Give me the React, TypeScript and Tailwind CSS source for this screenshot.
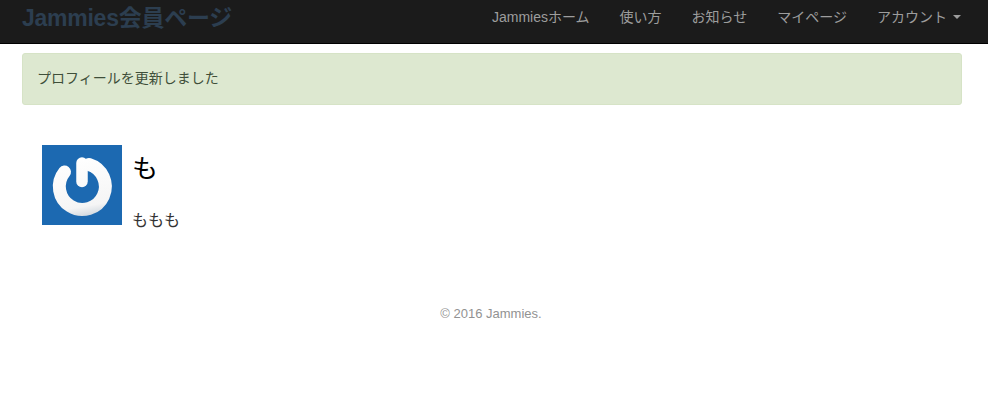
const font = "font-['Liberation_Sans','Noto_Sans_CJK_JP',sans-serif]";

const navItems = ["Jammiesホーム", "使い方", "お知らせ", "マイページ"];

function Logo() {
  return (
    <svg width="80" height="80" viewBox="0 0 80 80" className="block shrink-0">
      <defs>
        <linearGradient id="ring" gradientUnits="userSpaceOnUse" x1="34" y1="12" x2="44" y2="70">
          <stop offset="0" stopColor="#ffffff" />
          <stop offset="0.85" stopColor="#f5f5f5" />
          <stop offset="1" stopColor="#d6dce2" />
        </linearGradient>
      </defs>
      <rect width="80" height="80" fill="#1c69b1" />
      <path
        d="M22.5 27 A23 23 0 1 0 47 19.5"
        fill="none"
        stroke="url(#ring)"
        strokeWidth="13"
        strokeLinecap="round"
      />
      <path d="M40 18 L40 36.5" fill="none" stroke="url(#ring)" strokeWidth="11.5" strokeLinecap="round" />
    </svg>
  );
}

export default function App() {
  return (
    <div className={`${font} bg-white min-h-[402px] text-[14px] text-[#333]`}>
      <nav className="h-[44px] bg-[#1b1b1b] border-b border-black flex justify-between pl-[22px] pr-[27px]">
        <a className="text-[23px] leading-[36px] font-bold text-[#2c3e50] tracking-[-0.25px]">Jammies会員ページ</a>
        <ul className="flex gap-[30px] h-[34px] leading-[34px] text-[#9d9d9d]">
          {navItems.map((item) => (
            <li key={item}>{item}</li>
          ))}
          <li className="flex items-center gap-[6px]">
            アカウント
            <span className="w-0 h-0 border-x-4 border-x-transparent border-t-4 border-t-[#9d9d9d]" />
          </li>
        </ul>
      </nav>

      <div className="ml-[22px] mr-[26px] mt-[9px] h-[52px] pl-[14px] pr-[15px] flex items-center rounded-[3px] border border-[#d6e3c6] bg-[#dde8d0] text-[#3f4f3a]">
        <span className="-mt-[2px]">プロフィールを更新しました</span>
      </div>

      <div className="mt-[40px] ml-[42px] flex gap-[10px]">
        <Logo />
        <div>
          <h1 className="text-[26px] leading-[34px] mt-[7px] text-black">も</h1>
          <p className="text-[16px] leading-[24px] mt-[23px]">ももも</p>
        </div>
      </div>

      <footer className="mt-[72px] w-[982px] text-center text-[13px] leading-[18px] text-[#929292]">
        © 2016 Jammies.
      </footer>
    </div>
  );
}
